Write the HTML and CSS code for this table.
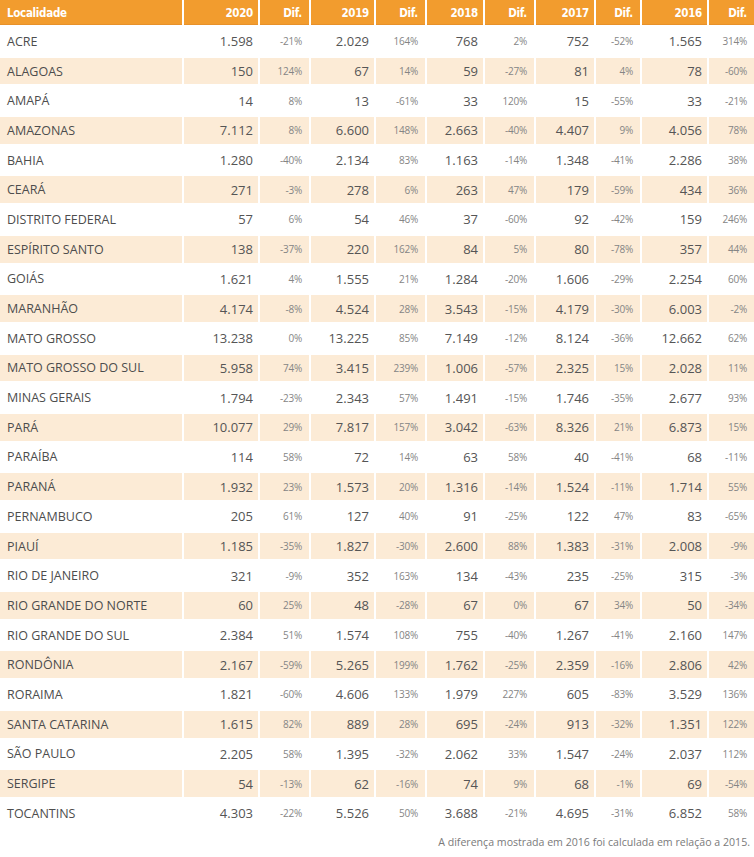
FILE: index.html
```html
<!DOCTYPE html>
<html lang="pt-BR">
<head>
<meta charset="utf-8">
<title>Tabela</title>
<link rel="stylesheet" href="styles.css">
</head>
<body>
<table class="data">
<colgroup>
<col class="c-loc"><col class="c-2020"><col class="c-d1"><col class="c-2019"><col class="c-d2"><col class="c-2018"><col class="c-d3"><col class="c-2017"><col class="c-d4"><col class="c-2016"><col class="c-d5">
</colgroup>
<thead>
<tr><th class="loc">Localidade</th><th>2020</th><th class="dh">Dif.</th><th>2019</th><th class="dh">Dif.</th><th>2018</th><th class="dh">Dif.</th><th>2017</th><th class="dh">Dif.</th><th>2016</th><th class="dh">Dif.</th></tr>
</thead>
<tbody id="rows">
<tr><td class="loc">ACRE</td><td class="n">1.598</td><td class="d">-21%</td><td class="n">2.029</td><td class="d">164%</td><td class="n">768</td><td class="d">2%</td><td class="n">752</td><td class="d">-52%</td><td class="n">1.565</td><td class="d">314%</td></tr>
<tr><td class="loc">ALAGOAS</td><td class="n">150</td><td class="d">124%</td><td class="n">67</td><td class="d">14%</td><td class="n">59</td><td class="d">-27%</td><td class="n">81</td><td class="d">4%</td><td class="n">78</td><td class="d">-60%</td></tr>
<tr><td class="loc">AMAPÁ</td><td class="n">14</td><td class="d">8%</td><td class="n">13</td><td class="d">-61%</td><td class="n">33</td><td class="d">120%</td><td class="n">15</td><td class="d">-55%</td><td class="n">33</td><td class="d">-21%</td></tr>
<tr><td class="loc">AMAZONAS</td><td class="n">7.112</td><td class="d">8%</td><td class="n">6.600</td><td class="d">148%</td><td class="n">2.663</td><td class="d">-40%</td><td class="n">4.407</td><td class="d">9%</td><td class="n">4.056</td><td class="d">78%</td></tr>
<tr><td class="loc">BAHIA</td><td class="n">1.280</td><td class="d">-40%</td><td class="n">2.134</td><td class="d">83%</td><td class="n">1.163</td><td class="d">-14%</td><td class="n">1.348</td><td class="d">-41%</td><td class="n">2.286</td><td class="d">38%</td></tr>
<tr><td class="loc">CEARÁ</td><td class="n">271</td><td class="d">-3%</td><td class="n">278</td><td class="d">6%</td><td class="n">263</td><td class="d">47%</td><td class="n">179</td><td class="d">-59%</td><td class="n">434</td><td class="d">36%</td></tr>
<tr><td class="loc">DISTRITO FEDERAL</td><td class="n">57</td><td class="d">6%</td><td class="n">54</td><td class="d">46%</td><td class="n">37</td><td class="d">-60%</td><td class="n">92</td><td class="d">-42%</td><td class="n">159</td><td class="d">246%</td></tr>
<tr><td class="loc">ESPÍRITO SANTO</td><td class="n">138</td><td class="d">-37%</td><td class="n">220</td><td class="d">162%</td><td class="n">84</td><td class="d">5%</td><td class="n">80</td><td class="d">-78%</td><td class="n">357</td><td class="d">44%</td></tr>
<tr><td class="loc">GOIÁS</td><td class="n">1.621</td><td class="d">4%</td><td class="n">1.555</td><td class="d">21%</td><td class="n">1.284</td><td class="d">-20%</td><td class="n">1.606</td><td class="d">-29%</td><td class="n">2.254</td><td class="d">60%</td></tr>
<tr><td class="loc">MARANHÃO</td><td class="n">4.174</td><td class="d">-8%</td><td class="n">4.524</td><td class="d">28%</td><td class="n">3.543</td><td class="d">-15%</td><td class="n">4.179</td><td class="d">-30%</td><td class="n">6.003</td><td class="d">-2%</td></tr>
<tr><td class="loc">MATO GROSSO</td><td class="n">13.238</td><td class="d">0%</td><td class="n">13.225</td><td class="d">85%</td><td class="n">7.149</td><td class="d">-12%</td><td class="n">8.124</td><td class="d">-36%</td><td class="n">12.662</td><td class="d">62%</td></tr>
<tr><td class="loc">MATO GROSSO DO SUL</td><td class="n">5.958</td><td class="d">74%</td><td class="n">3.415</td><td class="d">239%</td><td class="n">1.006</td><td class="d">-57%</td><td class="n">2.325</td><td class="d">15%</td><td class="n">2.028</td><td class="d">11%</td></tr>
<tr><td class="loc">MINAS GERAIS</td><td class="n">1.794</td><td class="d">-23%</td><td class="n">2.343</td><td class="d">57%</td><td class="n">1.491</td><td class="d">-15%</td><td class="n">1.746</td><td class="d">-35%</td><td class="n">2.677</td><td class="d">93%</td></tr>
<tr><td class="loc">PARÁ</td><td class="n">10.077</td><td class="d">29%</td><td class="n">7.817</td><td class="d">157%</td><td class="n">3.042</td><td class="d">-63%</td><td class="n">8.326</td><td class="d">21%</td><td class="n">6.873</td><td class="d">15%</td></tr>
<tr><td class="loc">PARAÍBA</td><td class="n">114</td><td class="d">58%</td><td class="n">72</td><td class="d">14%</td><td class="n">63</td><td class="d">58%</td><td class="n">40</td><td class="d">-41%</td><td class="n">68</td><td class="d">-11%</td></tr>
<tr><td class="loc">PARANÁ</td><td class="n">1.932</td><td class="d">23%</td><td class="n">1.573</td><td class="d">20%</td><td class="n">1.316</td><td class="d">-14%</td><td class="n">1.524</td><td class="d">-11%</td><td class="n">1.714</td><td class="d">55%</td></tr>
<tr><td class="loc">PERNAMBUCO</td><td class="n">205</td><td class="d">61%</td><td class="n">127</td><td class="d">40%</td><td class="n">91</td><td class="d">-25%</td><td class="n">122</td><td class="d">47%</td><td class="n">83</td><td class="d">-65%</td></tr>
<tr><td class="loc">PIAUÍ</td><td class="n">1.185</td><td class="d">-35%</td><td class="n">1.827</td><td class="d">-30%</td><td class="n">2.600</td><td class="d">88%</td><td class="n">1.383</td><td class="d">-31%</td><td class="n">2.008</td><td class="d">-9%</td></tr>
<tr><td class="loc">RIO DE JANEIRO</td><td class="n">321</td><td class="d">-9%</td><td class="n">352</td><td class="d">163%</td><td class="n">134</td><td class="d">-43%</td><td class="n">235</td><td class="d">-25%</td><td class="n">315</td><td class="d">-3%</td></tr>
<tr><td class="loc">RIO GRANDE DO NORTE</td><td class="n">60</td><td class="d">25%</td><td class="n">48</td><td class="d">-28%</td><td class="n">67</td><td class="d">0%</td><td class="n">67</td><td class="d">34%</td><td class="n">50</td><td class="d">-34%</td></tr>
<tr><td class="loc">RIO GRANDE DO SUL</td><td class="n">2.384</td><td class="d">51%</td><td class="n">1.574</td><td class="d">108%</td><td class="n">755</td><td class="d">-40%</td><td class="n">1.267</td><td class="d">-41%</td><td class="n">2.160</td><td class="d">147%</td></tr>
<tr><td class="loc">RONDÔNIA</td><td class="n">2.167</td><td class="d">-59%</td><td class="n">5.265</td><td class="d">199%</td><td class="n">1.762</td><td class="d">-25%</td><td class="n">2.359</td><td class="d">-16%</td><td class="n">2.806</td><td class="d">42%</td></tr>
<tr><td class="loc">RORAIMA</td><td class="n">1.821</td><td class="d">-60%</td><td class="n">4.606</td><td class="d">133%</td><td class="n">1.979</td><td class="d">227%</td><td class="n">605</td><td class="d">-83%</td><td class="n">3.529</td><td class="d">136%</td></tr>
<tr><td class="loc">SANTA CATARINA</td><td class="n">1.615</td><td class="d">82%</td><td class="n">889</td><td class="d">28%</td><td class="n">695</td><td class="d">-24%</td><td class="n">913</td><td class="d">-32%</td><td class="n">1.351</td><td class="d">122%</td></tr>
<tr><td class="loc">SÃO PAULO</td><td class="n">2.205</td><td class="d">58%</td><td class="n">1.395</td><td class="d">-32%</td><td class="n">2.062</td><td class="d">33%</td><td class="n">1.547</td><td class="d">-24%</td><td class="n">2.037</td><td class="d">112%</td></tr>
<tr><td class="loc">SERGIPE</td><td class="n">54</td><td class="d">-13%</td><td class="n">62</td><td class="d">-16%</td><td class="n">74</td><td class="d">9%</td><td class="n">68</td><td class="d">-1%</td><td class="n">69</td><td class="d">-54%</td></tr>
<tr><td class="loc">TOCANTINS</td><td class="n">4.303</td><td class="d">-22%</td><td class="n">5.526</td><td class="d">50%</td><td class="n">3.688</td><td class="d">-21%</td><td class="n">4.695</td><td class="d">-31%</td><td class="n">6.852</td><td class="d">58%</td></tr>
</tbody>
</table>
<p class="note">A diferença mostrada em 2016 foi calculada em relação a 2015.</p>
</body>
</html>
```
FILE: styles.css
```css
html, body {
  margin: 0;
  padding: 0;
  background: #ffffff;
}

body {
  width: 754px;
  height: 857px;
  overflow: hidden;
  font-family: "Open Sans", "Liberation Sans", sans-serif;
  color: #555555;
}

.data {
  border-collapse: separate;
  border-spacing: 2px 3px;
  table-layout: fixed;
  width: 758px;
  margin: -3px 0 0 -2px;
}

.c-loc { width: 182px; }
.c-2020 { width: 74px; }
.c-d1 { width: 49px; }
.c-2019 { width: 63px; }
.c-d2 { width: 49px; }
.c-2018 { width: 56px; }
.c-d3 { width: 49px; }
.c-2017 { width: 58px; }
.c-d4 { width: 44px; }
.c-2016 { width: 65px; }
.c-d5 { width: 45px; }

.data th,
.data td {
  box-sizing: border-box;
  padding: 0 5px 0 0;
  text-align: right;
  white-space: nowrap;
  overflow: hidden;
}

.data th {
  height: 25px;
  background: #f29c2e;
  color: #ffffff;
  font-family: "DejaVu Sans Condensed", "Liberation Sans", sans-serif;
  font-weight: bold;
  font-size: 11.5px;
  letter-spacing: -0.3px;
  padding-right: 5px;
  padding-top: 1px;
  box-shadow: inset 0 -1px 0 #e8912a;
}

.data th.dh {
  padding-right: 7px;
}

.data th.loc {
  text-align: left;
  padding-left: 7px;
}

.data td {
  height: 26.7px;
  font-size: 13px;
  color: #555555;
}

.data tbody tr:nth-child(even) td {
  background: #fcebd6;
}

.data td.loc {
  text-align: left;
  padding-left: 7px;
  font-size: 12.5px;
  color: #4d4d4d;
}

.data td.d {
  font-size: 10px;
  color: #858585;
  letter-spacing: -0.2px;
  padding-right: 7px;
}

.note {
  margin: 5px 4px 0 0;
  text-align: right;
  font-size: 10.6px;
  color: #7a7a7a;
}
```
